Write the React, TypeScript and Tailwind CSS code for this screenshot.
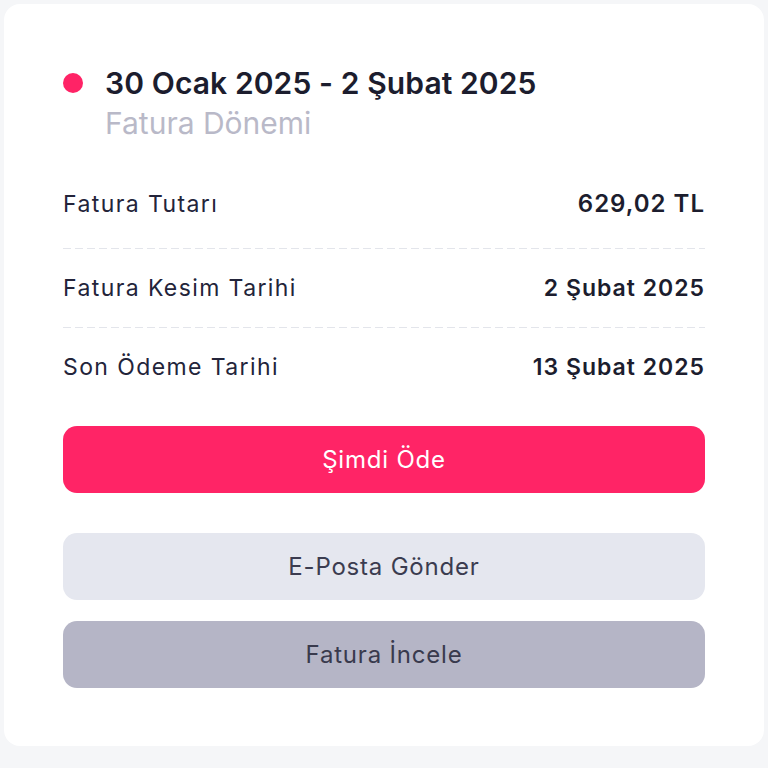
import React from 'react';

const dash = 'h-px w-full bg-[linear-gradient(to_right,#e3e5eb_8px,transparent_8px)] bg-[length:12px_1px] bg-repeat-x';

const rows = [
  { label: 'Fatura Tutarı', value: '629,02 TL', big: true },
  { label: 'Fatura Kesim Tarihi', value: '2 Şubat 2025' },
  { label: 'Son Ödeme Tarihi', value: '13 Şubat 2025' },
];

export default function App() {
  return (
    <div className="h-[768px] w-full bg-[#f5f6f8] p-1 font-['Inter',sans-serif]">
      <div className="flex h-[742px] flex-col rounded-2xl bg-white px-[59px] pt-[61px]">
        {/* Header */}
        <div className="flex items-center gap-[22px]">
          <span className="h-5 w-5 shrink-0 rounded-full bg-[#ff2366]" />
          <h2 className="text-[30px] font-semibold leading-9 tracking-[0.1px] text-[#1c1d2e]">
            30 Ocak 2025 - 2 Şubat 2025
          </h2>
        </div>
        <div className="ml-[42px] mt-[4px] text-[30px] leading-9 text-[#b9b9c8]">Fatura Dönemi</div>

        {/* Rows */}
        <div className="mt-[24px] flex flex-col">
          {rows.map((r, i) => (
            <div key={r.label}>
              <div className={`flex items-baseline justify-between ${i === 0 ? 'pt-[25px] pb-[30px]' : 'py-[25px]'}`}>
                <span className="text-[23px] leading-7 tracking-[1.4px] text-[#23243a]">{r.label}</span>
                <span
                  className={`font-semibold leading-7 tracking-[1px] text-[#1c1d2e] ${r.big ? 'text-[24px]' : 'text-[23px]'}`}
                >
                  {r.value}
                </span>
              </div>
              {i < rows.length - 1 && <div className={dash} />}
            </div>
          ))}
        </div>

        {/* Buttons */}
        <button className="mt-[20px] flex h-[67px] w-full items-center justify-center rounded-[14px] bg-[#ff2466] text-[24px] tracking-[0.8px] text-white">
          Şimdi Öde
        </button>
        <button className="mt-[40px] flex h-[67px] w-full items-center justify-center rounded-[14px] bg-[#e5e7ef] text-[24px] tracking-[0.8px] text-[#3b3c50]">
          E-Posta Gönder
        </button>
        <button className="mt-[21px] flex h-[67px] w-full items-center justify-center rounded-[14px] bg-[#b5b5c6] text-[24px] tracking-[0.8px] text-[#393a4d]">
          Fatura İncele
        </button>
      </div>
    </div>
  );
}
